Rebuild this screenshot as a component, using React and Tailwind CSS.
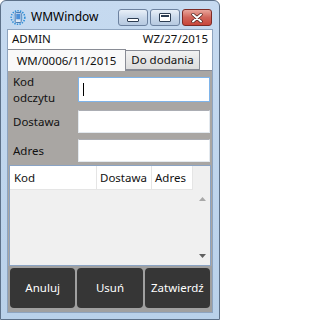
const font = "font-['Noto_Sans','Open_Sans',sans-serif]"

function AppIcon() {
  return (
    <svg width="16" height="17" viewBox="0 0 16 17" className="shrink-0">
      <circle cx="8" cy="8.5" r="6.8" fill="none" stroke="#2f8fd8" strokeWidth="1.6" strokeDasharray="1.4 1.2" />
      <circle cx="8" cy="8.5" r="4.6" fill="none" stroke="#7cc4f2" strokeWidth="1" strokeDasharray="1 1" />
      <rect x="5.2" y="3.5" width="6" height="10" rx="1" fill="#dfe9f5" stroke="#3a6ea8" strokeWidth="0.9" />
      <rect x="6.2" y="4.7" width="4" height="5.6" fill="#4a90d9" />
    </svg>
  )
}

function CaptionButton({ kind }) {
  if (kind === "close") {
    return (
      <div className="flex h-[17px] w-[30px] items-center justify-center rounded-[3px] border border-[#7d2b26] bg-gradient-to-b from-[#e8a59b] via-[#d0645a] to-[#c8463a]">
        <svg width="12" height="10" viewBox="0 0 12 10">
          <path d="M2 1.5 L10 8.5 M10 1.5 L2 8.5" stroke="#3c1410" strokeWidth="3.2" strokeLinecap="round" />
          <path d="M2 1.5 L10 8.5 M10 1.5 L2 8.5" stroke="#ffffff" strokeWidth="2" strokeLinecap="round" />
        </svg>
      </div>
    )
  }
  return (
    <div className="flex h-[17px] w-[30px] items-center justify-center rounded-[3px] border border-[#6c819f] bg-gradient-to-b from-[#e9f0f8] via-[#c9d8ea] to-[#b6c9e0]">
      {kind === "min" ? (
        <div className="mt-[5px] h-[4px] w-[12px] rounded-[1px] border border-[#2d3d52] bg-white" />
      ) : (
        <div className="h-[9px] w-[12px] rounded-[1px] border border-[#2d3d52] bg-white p-[1px]">
          <div className="h-full w-full border-t-[2px] border-[#2d3d52]" />
        </div>
      )}
    </div>
  )
}

function Field({ label, focused, height }) {
  return (
    <div className={"flex items-center " + height}>
      <div className="w-[68px] pl-[3px] text-[11.5px] leading-[16px] text-[#111]">{label}</div>
      <div
        className={
          "flex h-full flex-1 items-center border bg-white pl-[4px]" +
          (focused ? " border-[#7eb4ea]" : " border-[#e3e9ef] border-t-[#abadb3]")
        }
      >
        {focused && <div className="h-[13px] w-px bg-black" />}
      </div>
    </div>
  )
}

function ActionButton({ children }) {
  return (
    <button className="flex h-[40px] flex-1 items-center justify-center rounded-[4px] bg-[#363636] text-[11.5px] text-white">
      {children}
    </button>
  )
}

export default function App() {
  return (
    <div className={"flex h-[320px] w-[220px] flex-col rounded-t-[6px] border border-[#5d7189] bg-gradient-to-b from-[#c6daf0] to-[#b9d1ea] px-[6px] pb-[6px] " + font}>
      {/* Title bar */}
      <div className="flex h-[28px] items-start pl-[3px] pt-[8px]">
        <AppIcon />
        <span className="ml-[5px] text-[12px] leading-[16px] text-black">WMWindow</span>
        <div className="ml-auto flex gap-[2px] pr-[1px]">
          <CaptionButton kind="min" />
          <CaptionButton kind="max" />
          <CaptionButton kind="close" />
        </div>
      </div>

      {/* Client area */}
      <div className="flex flex-1 flex-col border border-[#8ea4bf] bg-[#a9a6a3]">
        <div className="flex h-[18px] items-center justify-between bg-white px-[4px] text-[11.5px] text-[#111]">
          <span>ADMIN</span>
          <span>WZ/27/2015</span>
        </div>

        {/* Tabs */}
        <div className="flex h-[22px] items-end bg-white">
          <div className="z-10 -mb-px flex h-[22px] w-[118px] items-center justify-center border border-b-0 border-l-0 border-[#898c95] bg-[#f9f9f9] text-[11.5px] text-[#111]">
            WM/0006/11/2015
          </div>
          <div className="flex h-[20px] w-[74px] items-center justify-center border border-l-0 border-[#898c95] bg-gradient-to-b from-[#f2f2f2] to-[#dcdcdc] text-[11.5px] text-[#111]">
            Do dodania
          </div>
        </div>

        {/* Form */}
        <div className="flex flex-col border-t border-[#898c95] px-[2px] pt-[6px] pb-[3px]">
          <Field label={<>Kod<br />odczytu</>} focused height="h-[25px]" />
          <div className="h-[8px]" />
          <Field label="Dostawa" height="h-[23px]" />
          <div className="h-[6px]" />
          <Field label="Adres" height="h-[23px]" />
        </div>

        {/* List */}
        <div className="mx-[1px] flex h-[101px] flex-col border border-[#8aa3c4] bg-[#f0f0f0]">
          <div className="flex h-[24px] shrink-0 text-[11.5px] text-[#111]">
            <div className="flex w-[87px] items-center border-r border-b border-[#e5e5e5] bg-white pl-[4px]">Kod</div>
            <div className="flex w-[55px] items-center border-r border-b border-[#e5e5e5] bg-white pl-[3px]">Dostawa</div>
            <div className="flex w-[41px] items-center border-r border-b border-[#e5e5e5] bg-white pl-[3px]">Adres</div>
          </div>
          <div className="flex flex-1">
            <div className="flex-1" />
            <div className="flex w-[16px] flex-col items-center justify-between py-[7px]">
              <svg width="7" height="4" viewBox="0 0 7 4"><path d="M0 4 L3.5 0 L7 4 Z" fill="#a8a8a8" /></svg>
              <svg width="7" height="4" viewBox="0 0 7 4"><path d="M0 0 L3.5 4 L7 0 Z" fill="#606060" /></svg>
            </div>
          </div>
        </div>

        {/* Buttons */}
        <div className="flex flex-1 gap-[2px] bg-[#a0a0a0] px-[2px] pt-[2px] pb-[2px]">
          <ActionButton>Anuluj</ActionButton>
          <ActionButton>Usuń</ActionButton>
          <ActionButton>Zatwierdź</ActionButton>
        </div>
      </div>
    </div>
  )
}
